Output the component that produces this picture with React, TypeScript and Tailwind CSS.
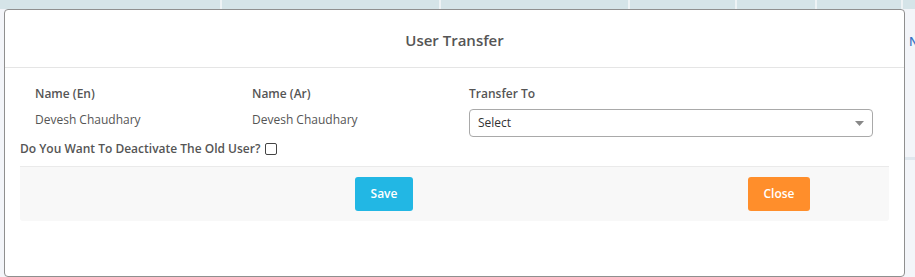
import React from "react";

export default function App() {
  const seps = [220, 439, 628, 735, 815, 901];
  return (
    <div
      className="relative w-[915px] h-[277px] overflow-hidden bg-[#f3f5f9]"
      style={{ fontFamily: '"Open Sans", "Liberation Sans", sans-serif' }}
    >
      {/* background table header strip */}
      <div className="absolute left-0 top-0 w-[915px] h-[9px] bg-[#d5e4e8]">
        {seps.map((x) => (
          <div key={x} className="absolute top-0 h-[9px] w-[2px] bg-[#eef3f5]" style={{ left: x }} />
        ))}
      </div>
      {/* background right side */}
      <div className="absolute left-[909px] top-[33px] text-[12px] text-[#3a73c4] font-semibold">N</div>
      <div className="absolute left-[904px] top-[157px] w-[11px] h-[3px] bg-[#dfe7ee]" />

      {/* modal */}
      <div className="absolute left-[4px] top-[9px] w-[901px] h-[268px] bg-white border border-[#8f8f8f] rounded-[4px]">
        <div className="h-[58px] border-b border-[#e5e5e5] flex items-center justify-center">
          <span className="text-[15px] font-semibold text-[#555] pt-[4px]">User Transfer</span>
        </div>
        <div className="px-[15px] pt-[17px]">
          <div className="grid grid-cols-[217px_217px_434px]">
            <div className="px-[15px]">
              <div className="text-[12px] font-semibold text-[#555] leading-[18px]">Name (En)</div>
              <div className="text-[12px] text-[#555] leading-[18px] mt-[8px]">Devesh Chaudhary</div>
            </div>
            <div className="px-[15px]">
              <div className="text-[12px] font-semibold text-[#555] leading-[18px]">Name (Ar)</div>
              <div className="text-[12px] text-[#555] leading-[18px] mt-[8px]">Devesh Chaudhary</div>
            </div>
            <div className="px-[15px]">
              <div className="text-[12px] font-semibold text-[#555] leading-[18px]">Transfer To</div>
              <div className="mt-[6px] h-[28px] w-[404px] border border-[#a9a9a9] rounded-[4px] flex items-center justify-between pl-[8px] pr-[8px]">
                <span className="text-[12px] text-[#333]">Select</span>
                <svg width="9" height="5" viewBox="0 0 9 5">
                  <path d="M0 0 L9 0 L4.5 5 Z" fill="#888" />
                </svg>
              </div>
            </div>
          </div>
          <div className="flex items-center mt-[2px] h-[20px]">
            <span className="text-[12px] font-semibold text-[#555]">Do You Want To Deactivate The Old User?</span>
            <span className="ml-[5px] inline-block w-[12px] h-[12px] border border-[#444] rounded-[2px] bg-white" />
          </div>
          <div className="mt-[7px] h-[55px] bg-[#f8f8f8] border-t border-[#eaeaea] rounded-b-[3px] flex items-center pl-[335px] gap-[335px]">
            <button className="w-[58px] h-[34px] bg-[#22b7e4] rounded-[3px] text-white text-[12px] font-semibold">
              Save
            </button>
            <button className="w-[62px] h-[34px] bg-[#ff8e2b] rounded-[3px] text-white text-[12px] font-semibold">
              Close
            </button>
          </div>
        </div>
      </div>
    </div>
  );
}
